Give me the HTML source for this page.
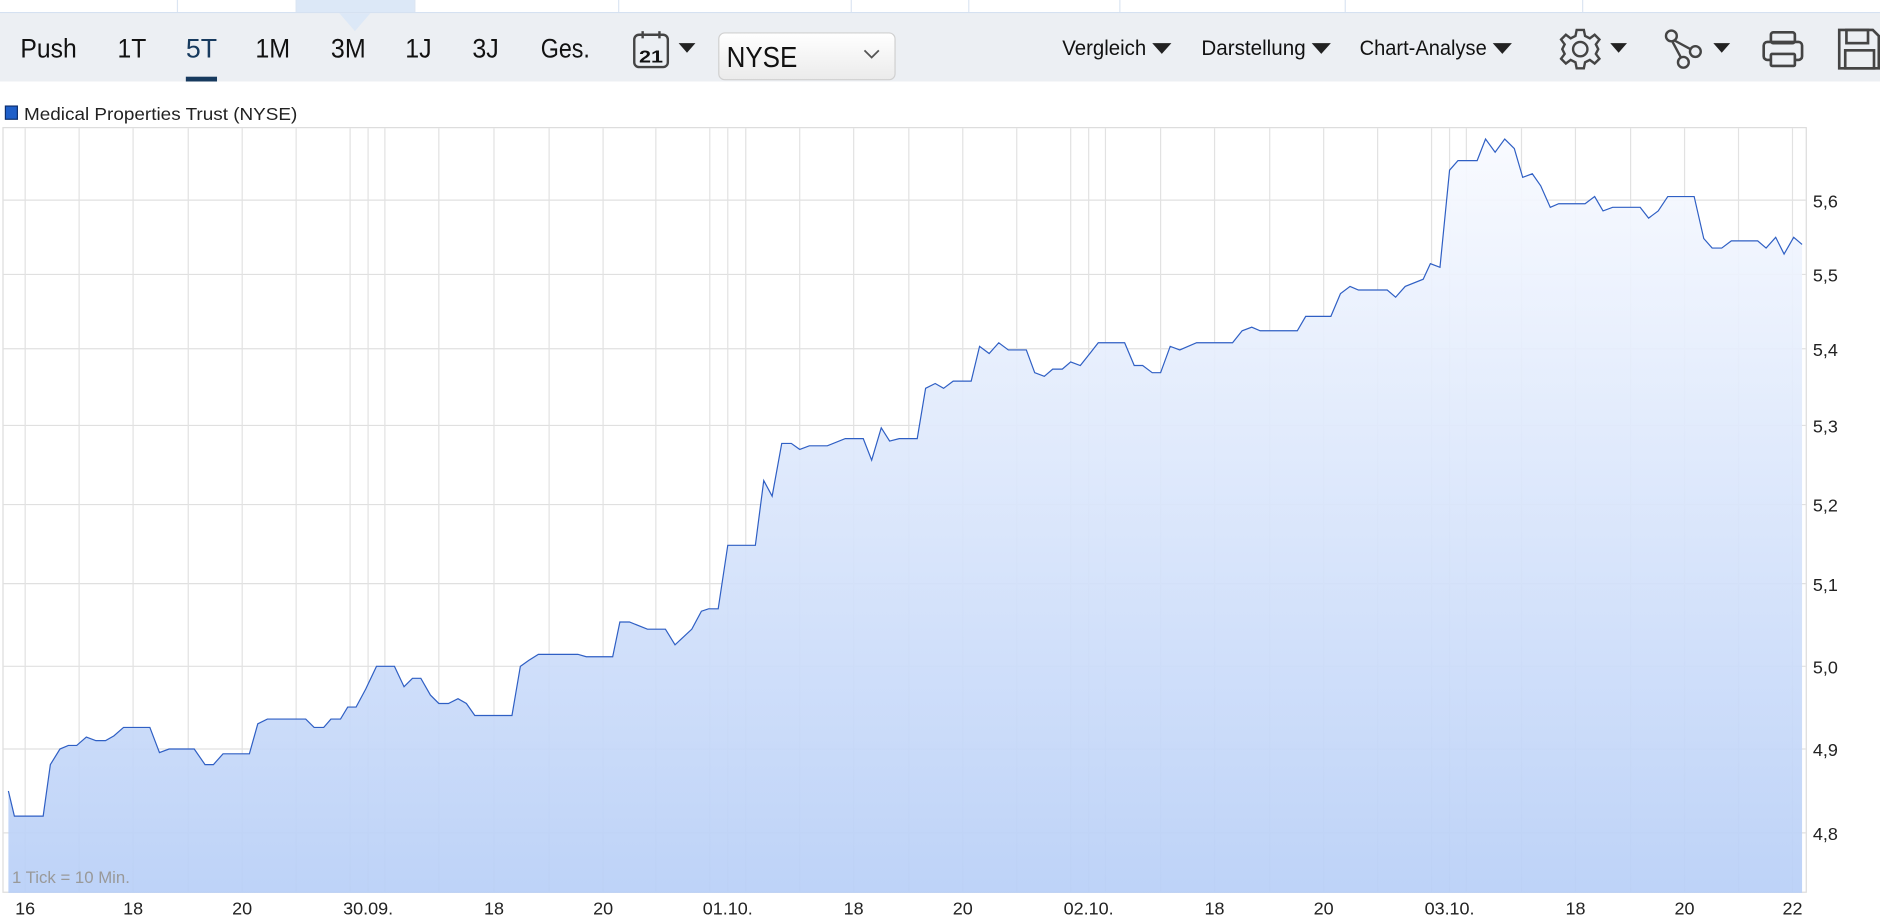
<!DOCTYPE html>
<html><head><meta charset="utf-8"><style>
html,body{margin:0;padding:0;background:#fff;overflow:hidden}
svg{display:block}
.tb{font-family:"Liberation Sans Narrow","Liberation Sans",sans-serif;fill:#111}
.ax{font-family:"Liberation Sans",sans-serif;font-size:15px;fill:#222}
</style></head><body>
<svg width="1880" height="918" viewBox="0 0 1568 766" preserveAspectRatio="none" xmlns="http://www.w3.org/2000/svg">
<defs>
<linearGradient id="fg" x1="0" y1="0" x2="0" y2="1">
<stop offset="0" stop-color="#f8faff"/><stop offset="1" stop-color="#b8cff7"/>
</linearGradient>
<linearGradient id="sel" x1="0" y1="0" x2="0" y2="1">
<stop offset="0" stop-color="#ffffff"/><stop offset="1" stop-color="#ebebeb"/>
</linearGradient>
</defs>
<rect x="0" y="0" width="1568" height="10" fill="#fff"/>
<rect x="247" y="0" width="99" height="11" fill="#dce8f7"/>
<g stroke="#dbe5f2" stroke-width="1">
<line x1="148" y1="0" x2="148" y2="10"/><line x1="247" y1="0" x2="247" y2="10"/><line x1="346" y1="0" x2="346" y2="10"/>
<line x1="516" y1="0" x2="516" y2="10"/><line x1="710" y1="0" x2="710" y2="10"/><line x1="808" y1="0" x2="808" y2="10"/>
<line x1="934" y1="0" x2="934" y2="10"/><line x1="1122" y1="0" x2="1122" y2="10"/><line x1="1320" y1="0" x2="1320" y2="10"/>
</g>
<rect x="0" y="10" width="1568" height="58" fill="#eceff3"/>
<line x1="0" y1="10.5" x2="1568" y2="10.5" stroke="#d5e1f1"/>
<polygon points="283,11 309,11 296,26" fill="#dce8f7"/>
<g class="tb" font-size="22">
<text x="17" y="48" textLength="47" lengthAdjust="spacingAndGlyphs">Push</text>
<text x="98" y="48" textLength="24" lengthAdjust="spacingAndGlyphs">1T</text>
<text x="155" y="48" textLength="26" lengthAdjust="spacingAndGlyphs" fill="#173a5e">5T</text>
<text x="213" y="48" textLength="29" lengthAdjust="spacingAndGlyphs">1M</text>
<text x="276" y="48" textLength="29" lengthAdjust="spacingAndGlyphs">3M</text>
<text x="338" y="48" textLength="22" lengthAdjust="spacingAndGlyphs">1J</text>
<text x="394" y="48" textLength="22" lengthAdjust="spacingAndGlyphs">3J</text>
<text x="451" y="48" textLength="41" lengthAdjust="spacingAndGlyphs">Ges.</text>
</g>
<rect x="155" y="64" width="26" height="4" fill="#173a5e"/>
<rect x="529" y="29" width="28" height="27" rx="4" fill="none" stroke="#444" stroke-width="2"/>
<line x1="536" y1="26" x2="536" y2="32" stroke="#444" stroke-width="2"/><line x1="550" y1="26" x2="550" y2="32" stroke="#444" stroke-width="2"/>
<text x="533" y="52" class="tb" font-size="15" font-weight="bold" fill="#444" textLength="20" lengthAdjust="spacingAndGlyphs">21</text>
<polygon points="566,36 580,36 573,44" fill="#222"/>
<rect x="599.5" y="27.5" width="147" height="39" rx="5" fill="url(#sel)" stroke="#d0d0d0"/>
<text x="606" y="56" class="tb" font-size="24" textLength="59" lengthAdjust="spacingAndGlyphs">NYSE</text>
<polyline points="721,42 727,48 733,42" fill="none" stroke="#555" stroke-width="1.5"/>
<g class="tb" font-size="18">
<text x="886" y="46" textLength="70" lengthAdjust="spacingAndGlyphs">Vergleich</text>
<text x="1002" y="46" textLength="87" lengthAdjust="spacingAndGlyphs">Darstellung</text>
<text x="1134" y="46" textLength="106" lengthAdjust="spacingAndGlyphs">Chart-Analyse</text>
</g>
<g fill="#222">
<polygon points="961,36 977,36 969,45"/><polygon points="1094,36 1110,36 1102,45"/><polygon points="1245,36 1261,36 1253,45"/>
<polygon points="1343,36 1357,36 1350,44"/><polygon points="1429,36 1443,36 1436,44"/>
</g>
<g transform="translate(1318,41)" fill="none" stroke="#444" stroke-width="2">
<path d="M-3,-16 L3,-16 L4,-11 L8,-9 L12,-12 L16,-8 L13,-4 L15,0 L13,4 L16,8 L12,12 L8,9 L4,11 L3,16 L-3,16 L-4,11 L-8,9 L-12,12 L-16,8 L-13,4 L-15,0 L-13,-4 L-16,-8 L-12,-12 L-8,-9 L-4,-11 Z"/>
<circle r="6"/>
</g>
<g fill="none" stroke="#444" stroke-width="2">
<circle cx="1394" cy="30" r="4.5"/><circle cx="1414" cy="43" r="4.5"/><circle cx="1404" cy="52" r="4.5"/>
<line x1="1397" y1="34" x2="1410" y2="41"/><line x1="1395" y1="35" x2="1402" y2="48"/>
</g>
<g fill="none" stroke="#444" stroke-width="2.2">
<rect x="1477" y="27" width="20" height="9" rx="2"/>
<rect x="1471" y="35" width="32" height="15" rx="3"/>
<rect x="1477" y="45" width="20" height="10" rx="1" fill="#eceff3"/>
</g>
<g fill="none" stroke="#444" stroke-width="2.2">
<path d="M1534,25 H1562 L1567,30 V57 H1534 Z"/>
<rect x="1540" y="25" width="18" height="11"/>
<rect x="1539" y="42" width="24" height="15"/>
</g>
<rect x="4.5" y="88.5" width="10" height="11" fill="#1f5fc9" stroke="#0d2f6e"/>
<text x="20" y="100" font-family="Liberation Sans,sans-serif" font-size="15" fill="#222" textLength="228" lengthAdjust="spacingAndGlyphs">Medical Properties Trust (NYSE)</text>
<rect x="2.5" y="106.5" width="1504" height="638" fill="#fff" stroke="#dcdcdc"/>
<g stroke="#e0e0e0" stroke-width="1">
<line x1="3" y1="167" x2="1506" y2="167"/><line x1="3" y1="229" x2="1506" y2="229"/><line x1="3" y1="291" x2="1506" y2="291"/>
<line x1="3" y1="355" x2="1506" y2="355"/><line x1="3" y1="421" x2="1506" y2="421"/><line x1="3" y1="487" x2="1506" y2="487"/>
<line x1="3" y1="556" x2="1506" y2="556"/><line x1="3" y1="625" x2="1506" y2="625"/><line x1="3" y1="695" x2="1506" y2="695"/>
</g>
<g stroke="#e2e2e2" stroke-width="1">
<line x1="21" y1="107" x2="21" y2="745"/><line x1="66" y1="107" x2="66" y2="745"/><line x1="111" y1="107" x2="111" y2="745"/><line x1="157" y1="107" x2="157" y2="745"/><line x1="202" y1="107" x2="202" y2="745"/><line x1="247" y1="107" x2="247" y2="745"/>
<line x1="292" y1="107" x2="292" y2="745"/><line x1="307" y1="107" x2="307" y2="745"/><line x1="321" y1="107" x2="321" y2="745"/><line x1="366" y1="107" x2="366" y2="745"/><line x1="412" y1="107" x2="412" y2="745"/><line x1="458" y1="107" x2="458" y2="745"/><line x1="503" y1="107" x2="503" y2="745"/><line x1="547" y1="107" x2="547" y2="745"/>
<line x1="592" y1="107" x2="592" y2="745"/><line x1="607" y1="107" x2="607" y2="745"/><line x1="622" y1="107" x2="622" y2="745"/><line x1="667" y1="107" x2="667" y2="745"/><line x1="712" y1="107" x2="712" y2="745"/><line x1="758" y1="107" x2="758" y2="745"/><line x1="803" y1="107" x2="803" y2="745"/><line x1="848" y1="107" x2="848" y2="745"/>
<line x1="893" y1="107" x2="893" y2="745"/><line x1="908" y1="107" x2="908" y2="745"/><line x1="922" y1="107" x2="922" y2="745"/><line x1="968" y1="107" x2="968" y2="745"/><line x1="1013" y1="107" x2="1013" y2="745"/><line x1="1059" y1="107" x2="1059" y2="745"/><line x1="1104" y1="107" x2="1104" y2="745"/><line x1="1149" y1="107" x2="1149" y2="745"/>
<line x1="1194" y1="107" x2="1194" y2="745"/><line x1="1209" y1="107" x2="1209" y2="745"/><line x1="1223" y1="107" x2="1223" y2="745"/><line x1="1269" y1="107" x2="1269" y2="745"/><line x1="1314" y1="107" x2="1314" y2="745"/><line x1="1360" y1="107" x2="1360" y2="745"/><line x1="1405" y1="107" x2="1405" y2="745"/><line x1="1450" y1="107" x2="1450" y2="745"/><line x1="1495" y1="107" x2="1495" y2="745"/>
</g>
<path fill="url(#fg)" fill-opacity="0.92" d="M7,660 L12,681 L36,681 L42,638 L50,625 L57,622 L64,622 L72,615 L80,618 L88,618 L95,614 L103,607 L125,607 L133,628 L141,625 L162,625 L171,638 L178,638 L186,629 L208,629 L215,604 L223,600 L255,600 L262,607 L270,607 L276,600 L284,600 L290,590 L297,590 L305,575 L314,556 L329,556 L337,573 L344,566 L351,566 L359,580 L366,587 L374,587 L382,583 L389,587 L396,597 L427,597 L434,556 L441,551 L449,546 L482,546 L489,548 L511,548 L517,519 L525,519 L540,525 L555,525 L563,538 L577,525 L585,510 L591,508 L599,508 L607,455 L630,455 L637,401 L644,414 L652,370 L660,370 L667,375 L675,372 L690,372 L705,366 L720,366 L727,384 L735,357 L742,368 L750,366 L765,366 L772,324 L780,320 L787,324 L795,318 L810,318 L817,289 L825,295 L833,286 L841,292 L856,292 L863,311 L871,314 L878,308 L886,308 L893,302 L901,305 L909,295 L916,286 L938,286 L946,305 L953,305 L961,311 L968,311 L976,289 L984,292 L991,289 L998,286 L1028,286 L1036,276 L1044,273 L1051,276 L1082,276 L1089,264 L1110,264 L1118,245 L1126,239 L1133,242 L1157,242 L1164,248 L1172,239 L1187,233 L1193,220 L1201,223 L1209,142 L1216,134 L1232,134 L1239,116 L1247,127 L1255,116 L1263,124 L1270,148 L1278,145 L1285,155 L1293,173 L1300,170 L1322,170 L1330,164 L1337,176 L1345,173 L1368,173 L1375,182 L1383,176 L1391,164 L1413,164 L1421,199 L1428,207 L1436,207 L1444,201 L1466,201 L1473,207 L1481,198 L1488,212 L1496,198 L1503,204 L1503,745 L7,745 Z"/>
<polyline fill="none" stroke="#2f5fc4" stroke-width="1" points="7,660 12,681 36,681 42,638 50,625 57,622 64,622 72,615 80,618 88,618 95,614 103,607 125,607 133,628 141,625 162,625 171,638 178,638 186,629 208,629 215,604 223,600 255,600 262,607 270,607 276,600 284,600 290,590 297,590 305,575 314,556 329,556 337,573 344,566 351,566 359,580 366,587 374,587 382,583 389,587 396,597 427,597 434,556 441,551 449,546 482,546 489,548 511,548 517,519 525,519 540,525 555,525 563,538 577,525 585,510 591,508 599,508 607,455 630,455 637,401 644,414 652,370 660,370 667,375 675,372 690,372 705,366 720,366 727,384 735,357 742,368 750,366 765,366 772,324 780,320 787,324 795,318 810,318 817,289 825,295 833,286 841,292 856,292 863,311 871,314 878,308 886,308 893,302 901,305 909,295 916,286 938,286 946,305 953,305 961,311 968,311 976,289 984,292 991,289 998,286 1028,286 1036,276 1044,273 1051,276 1082,276 1089,264 1110,264 1118,245 1126,239 1133,242 1157,242 1164,248 1172,239 1187,233 1193,220 1201,223 1209,142 1216,134 1232,134 1239,116 1247,127 1255,116 1263,124 1270,148 1278,145 1285,155 1293,173 1300,170 1322,170 1330,164 1337,176 1345,173 1368,173 1375,182 1383,176 1391,164 1413,164 1421,199 1428,207 1436,207 1444,201 1466,201 1473,207 1481,198 1488,212 1496,198 1503,204"/>
<text x="10" y="737" font-family="Liberation Sans,sans-serif" font-size="14" fill="#999">1 Tick = 10 Min.</text>
<g class="ax">
<text x="1512" y="173">5,6</text><text x="1512" y="235">5,5</text><text x="1512" y="297">5,4</text><text x="1512" y="361">5,3</text><text x="1512" y="427">5,2</text><text x="1512" y="493">5,1</text><text x="1512" y="562">5,0</text><text x="1512" y="631">4,9</text><text x="1512" y="701">4,8</text>
</g>
<g class="ax" text-anchor="middle">
<text x="21" y="763">16</text><text x="111" y="763">18</text><text x="202" y="763">20</text><text x="307" y="763">30.09.</text><text x="412" y="763">18</text><text x="503" y="763">20</text><text x="607" y="763">01.10.</text><text x="712" y="763">18</text><text x="803" y="763">20</text><text x="908" y="763">02.10.</text><text x="1013" y="763">18</text><text x="1104" y="763">20</text><text x="1209" y="763">03.10.</text><text x="1314" y="763">18</text><text x="1405" y="763">20</text><text x="1495" y="763">22</text>
</g>
</svg>
</body></html>
